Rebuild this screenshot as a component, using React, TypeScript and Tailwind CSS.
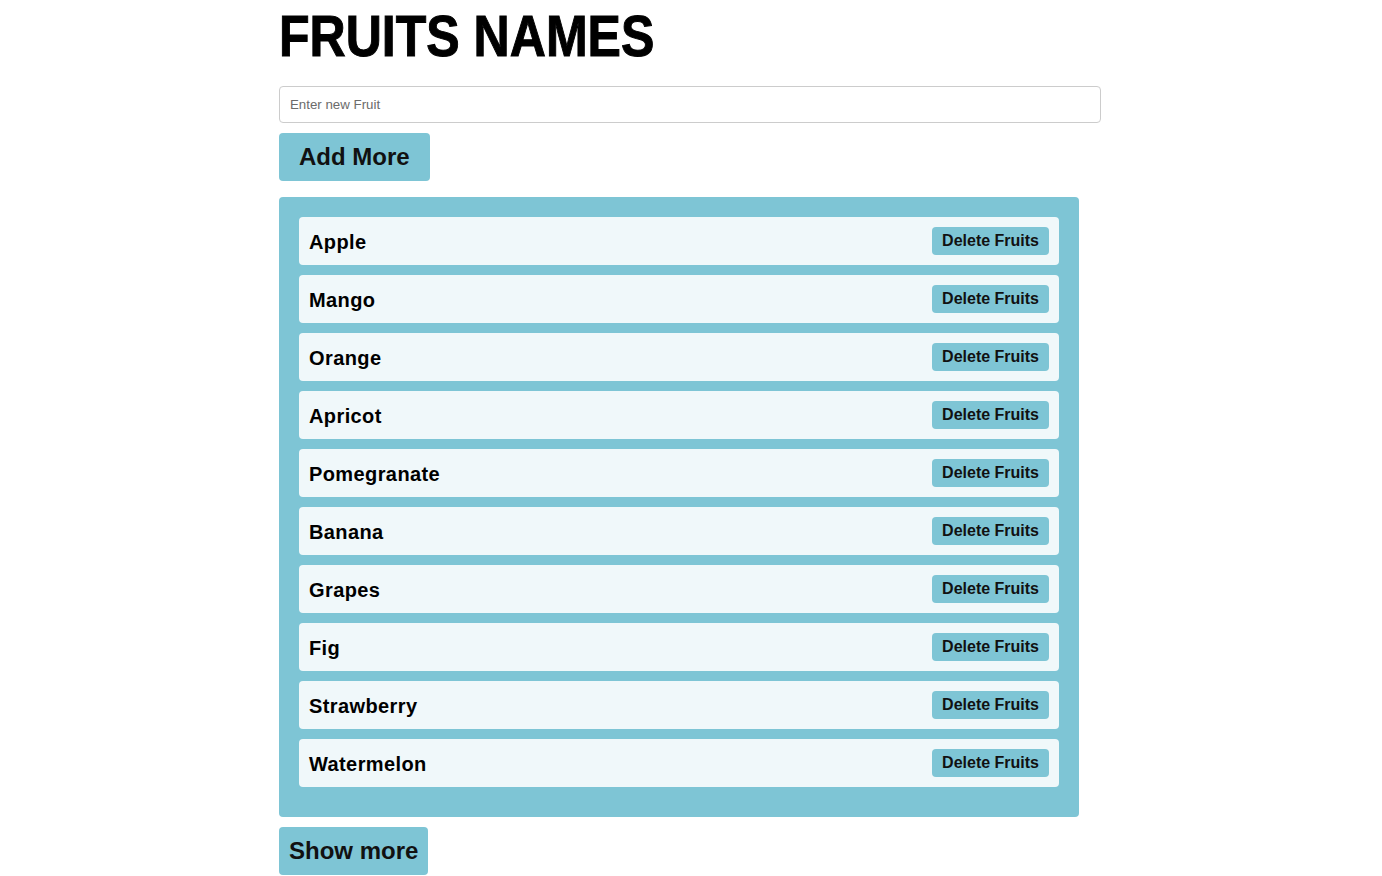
import { useState } from "react";

const initialFruits = [
  "Apple",
  "Mango",
  "Orange",
  "Apricot",
  "Pomegranate",
  "Banana",
  "Grapes",
  "Fig",
  "Strawberry",
  "Watermelon",
];

export default function App() {
  const [fruits, setFruits] = useState(initialFruits);
  const [value, setValue] = useState("");

  const addFruit = () => {
    if (!value.trim()) return;
    setFruits([...fruits, value.trim()]);
    setValue("");
  };

  return (
    <div className="min-h-screen bg-white pl-[279px] font-['Liberation_Sans',Arial,sans-serif] text-[#111]">
      <h1 className="pt-[8px] text-[57px] font-bold leading-none text-black">
        <span className="inline-block origin-left scale-x-[0.878] [-webkit-text-stroke:1px_black]">FRUITS NAMES</span>
      </h1>
      <input
        value={value}
        onChange={(e) => setValue(e.target.value)}
        placeholder="Enter new Fruit"
        className="mt-[21px] block h-[37px] w-[822px] rounded border border-[#cccccc] px-[10px] text-[13.3px] text-black outline-none placeholder:text-[#6b6b6b]"
      />
      <button
        onClick={addFruit}
        className="mt-[10px] block h-[48px] rounded bg-[#7ec5d5] px-[20px] text-[24px] font-bold text-[#111]"
      >
        Add More
      </button>
      <ul className="mt-[16px] w-[800px] rounded bg-[#7ec5d5] px-[20px] pb-[20px] pt-[20px]">
        {fruits.map((fruit, i) => (
          <li
            key={fruit + i}
            className="mb-[10px] flex h-[48px] items-center justify-between rounded bg-[#f0f8fa] px-[10px]"
          >
            <span className="pt-[2px] text-[20px] font-bold tracking-[0.4px] text-black">{fruit}</span>
            <button
              onClick={() => setFruits(fruits.filter((_, j) => j !== i))}
              className="h-[28px] rounded bg-[#7ec5d5] px-[10px] text-[16px] font-bold text-[#111]"
            >
              Delete Fruits
            </button>
          </li>
        ))}
      </ul>
      <button className="mt-[10px] block h-[48px] rounded bg-[#7ec5d5] px-[10px] text-[24px] font-bold text-[#111]">
        Show more
      </button>
    </div>
  );
}
